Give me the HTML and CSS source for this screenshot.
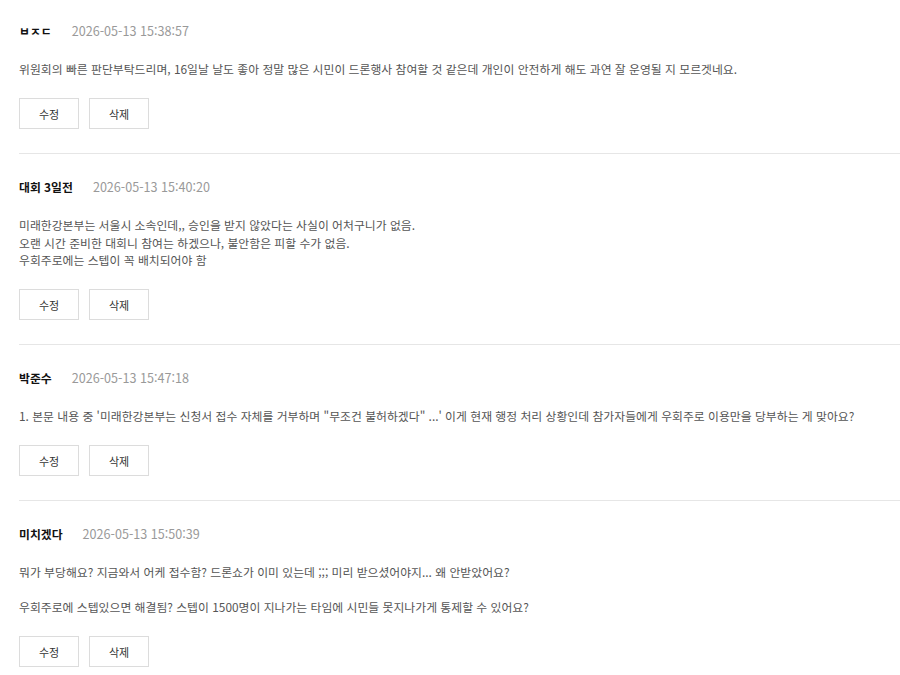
FILE: index.html
```html
<!DOCTYPE html>
<html lang="ko">
<head>
<meta charset="utf-8">
<link rel="stylesheet" href="styles.css">
</head>
<body>
<div class="list">
  <div class="item first">
    <div class="meta"><span class="author">ㅂㅈㄷ</span><span class="date">2026-05-13 15:38:57</span></div>
    <div class="body"><p>위원회의 빠른 판단부탁드리며, 16일날 날도 좋아 정말 많은 시민이 드론행사 참여할 것 같은데 개인이 안전하게 해도 과연 잘 운영될 지 모르겟네요.</p></div>
    <div class="actions"><button class="btn">수정</button><button class="btn">삭제</button></div>
  </div>
  <div class="item">
    <div class="meta"><span class="author">대회 3일전</span><span class="date">2026-05-13 15:40:20</span></div>
    <div class="body"><p>미래한강본부는 서울시 소속인데,, 승인을 받지 않았다는 사실이 어처구니가 없음.<br>오랜 시간 준비한 대회니 참여는 하겠으나, 불안함은 피할 수가 없음.<br>우회주로에는 스텝이 꼭 배치되어야 함</p></div>
    <div class="actions"><button class="btn">수정</button><button class="btn">삭제</button></div>
  </div>
  <div class="item">
    <div class="meta"><span class="author">박준수</span><span class="date">2026-05-13 15:47:18</span></div>
    <div class="body"><p>1. 본문 내용 중 '미래한강본부는 신청서 접수 자체를 거부하며 "무조건 불허하겠다" ...' 이게 현재 행정 처리 상황인데 참가자들에게 우회주로 이용만을 당부하는 게 맞아요?</p></div>
    <div class="actions"><button class="btn">수정</button><button class="btn">삭제</button></div>
  </div>
  <div class="item">
    <div class="meta"><span class="author">미치겠다</span><span class="date">2026-05-13 15:50:39</span></div>
    <div class="body"><p>뭐가 부당해요? 지금와서 어케 접수함? 드론쇼가 이미 있는데 ;;; 미리 받으셨어야지... 왜 안받았어요?<br><br>우회주로에 스텝있으면 해결됨? 스텝이 1500명이 지나가는 타임에 시민들 못지나가게 통제할 수 있어요?</p></div>
    <div class="actions"><button class="btn">수정</button><button class="btn">삭제</button></div>
  </div>
</div>
</body>
</html>
```

FILE: styles.css
```css
html, body {
  margin: 0;
  padding: 0;
  background: #fff;
}
body {
  font-family: "Noto Sans CJK KR", "Noto Sans", sans-serif;
  color: #333;
  overflow: hidden;
}
.list {
  margin-left: 19px;
}
.item {
  padding: 25px 0 24px;
  border-bottom: 1px solid #e6e6e6;
}
.item.first {
  padding-top: 23px;
}
.meta {
  display: flex;
  align-items: center;
  gap: 20px;
  height: 16px;
  line-height: 16px;
}
.author {
  font-size: 11.85px;
  font-weight: 700;
  color: #111;
}
.date {
  font-size: 12.6px;
  color: #999;
}
.body {
  margin-top: 21px;
}
.body p {
  margin: 0;
  font-size: 11.85px;
  line-height: 17.3px;
  color: #555;
}
.actions {
  display: flex;
  gap: 10px;
  margin-top: 21px;
}
.btn {
  width: 60px;
  height: 31px;
  padding: 0;
  background: #fff;
  border: 1px solid #dcdcdc;
  font-family: "Noto Sans CJK KR", sans-serif;
  font-size: 11px;
  color: #333;
}
```
